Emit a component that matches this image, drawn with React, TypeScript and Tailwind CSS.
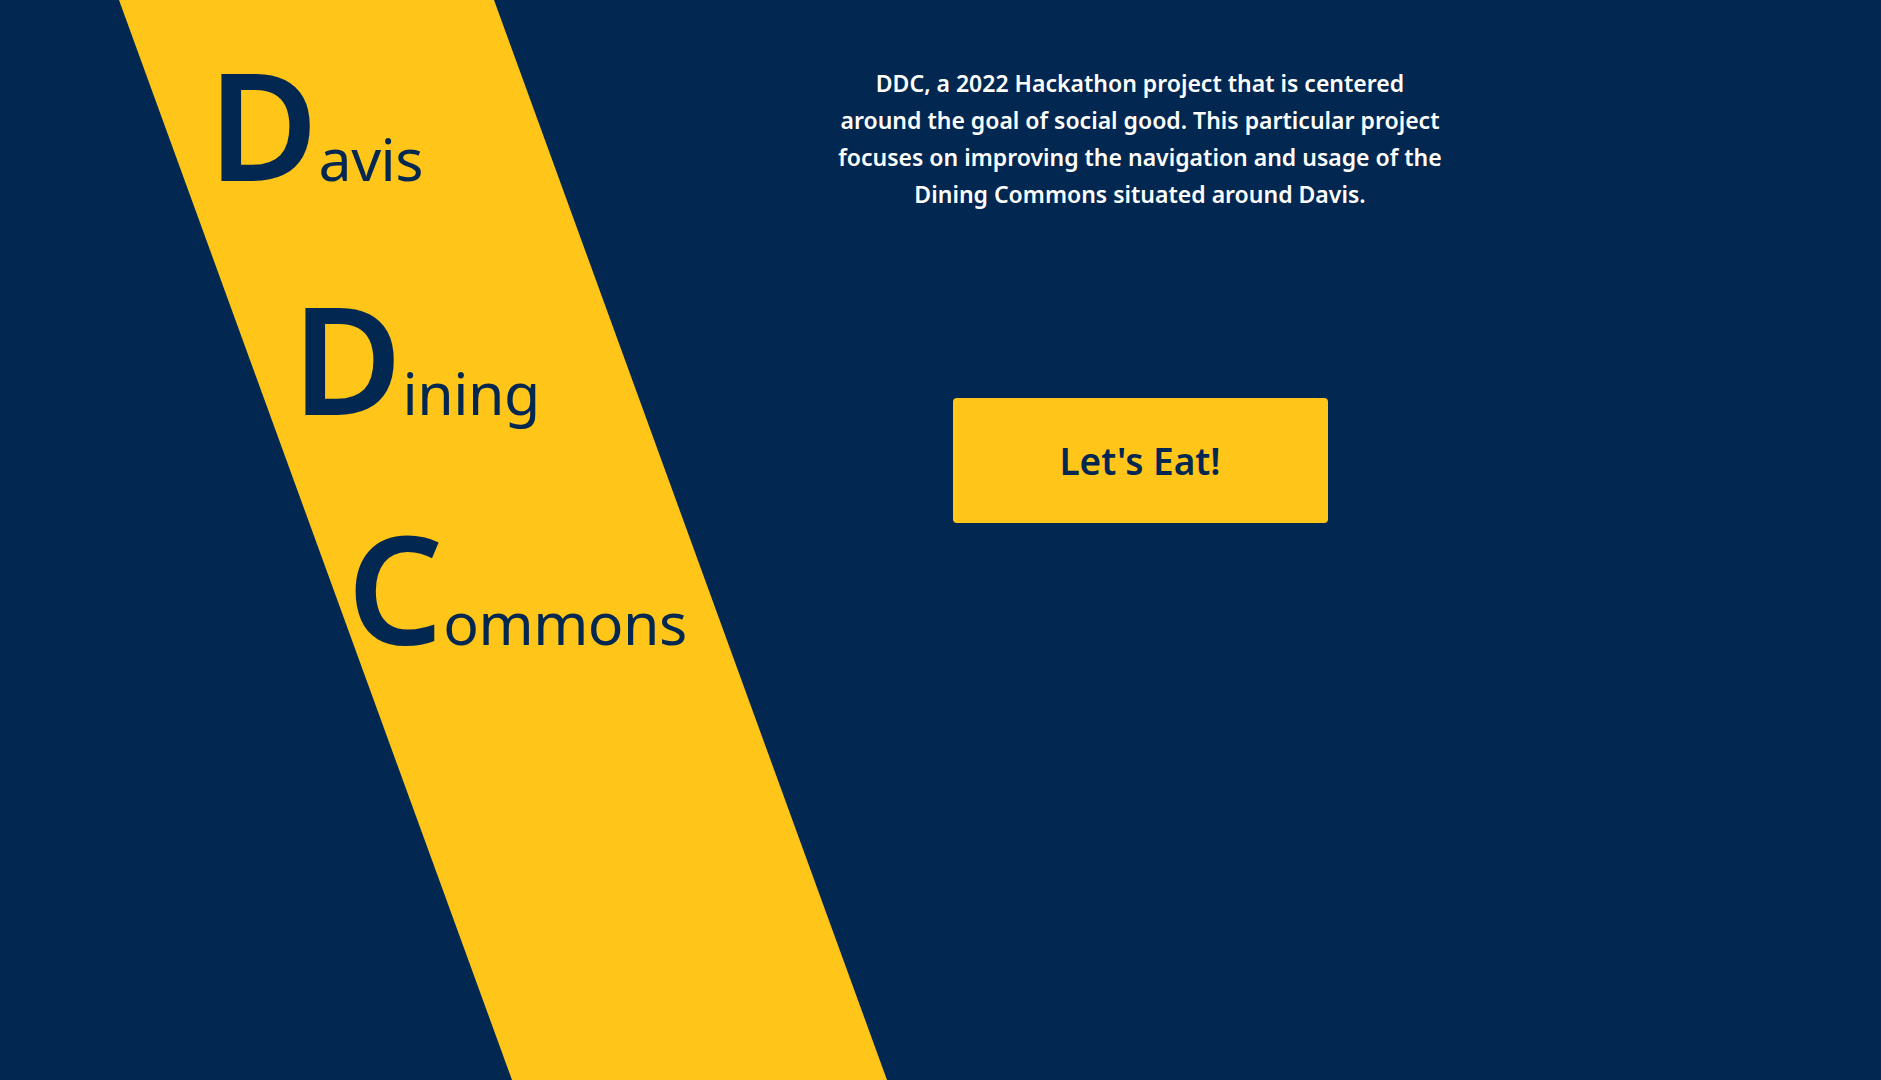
import React from 'react';

const words = [
  { big: 'D', rest: 'avis', place: 'ml-[208px] mt-0' },
  { big: 'D', rest: 'ining', place: 'ml-[292px] mt-[83px]' },
  { big: 'C', rest: 'ommons', place: 'ml-[347px] mt-[79px]' },
];

const App = () => {
  return (
    <div className="relative h-screen w-full overflow-hidden bg-[#022851] font-['Noto_Sans',sans-serif]">
      {/* gold diagonal band */}
      <div className="absolute inset-0 bg-[#ffc519] [clip-path:polygon(119px_0,494px_0,887px_100%,512px_100%)]" />

      <main className="relative flex h-full">
        {/* Title */}
        <div className="flex w-[760px] flex-col pt-[47px] text-[#022851]">
          {words.map((w, i) => (
            <div key={i} className={`flex items-baseline leading-none ${w.place}`}>
              <span className="text-[151px] font-semibold tracking-[-6px]">{w.big}</span>
              <span className="ml-[6px] text-[59px] tracking-[-0.5px]">{w.rest}</span>
            </div>
          ))}
        </div>

        {/* Intro + button */}
        <div className="flex w-[760px] flex-col items-center pt-[65px]">
          <p className="text-center text-[23px] font-semibold leading-[37px] text-white">
            DDC, a 2022 Hackathon project that is centered
            <br />
            around the goal of social good. This particular project
            <br />
            focuses on improving the navigation and usage of the
            <br />
            Dining Commons situated around Davis.
          </p>

          <button className="mt-[185px] flex h-[125px] w-[375px] items-center justify-center rounded-[4px] bg-[#ffc519] text-[37px] font-semibold text-[#022851]">
            Let's Eat!
          </button>
        </div>
      </main>
    </div>
  );
};

export default App;
